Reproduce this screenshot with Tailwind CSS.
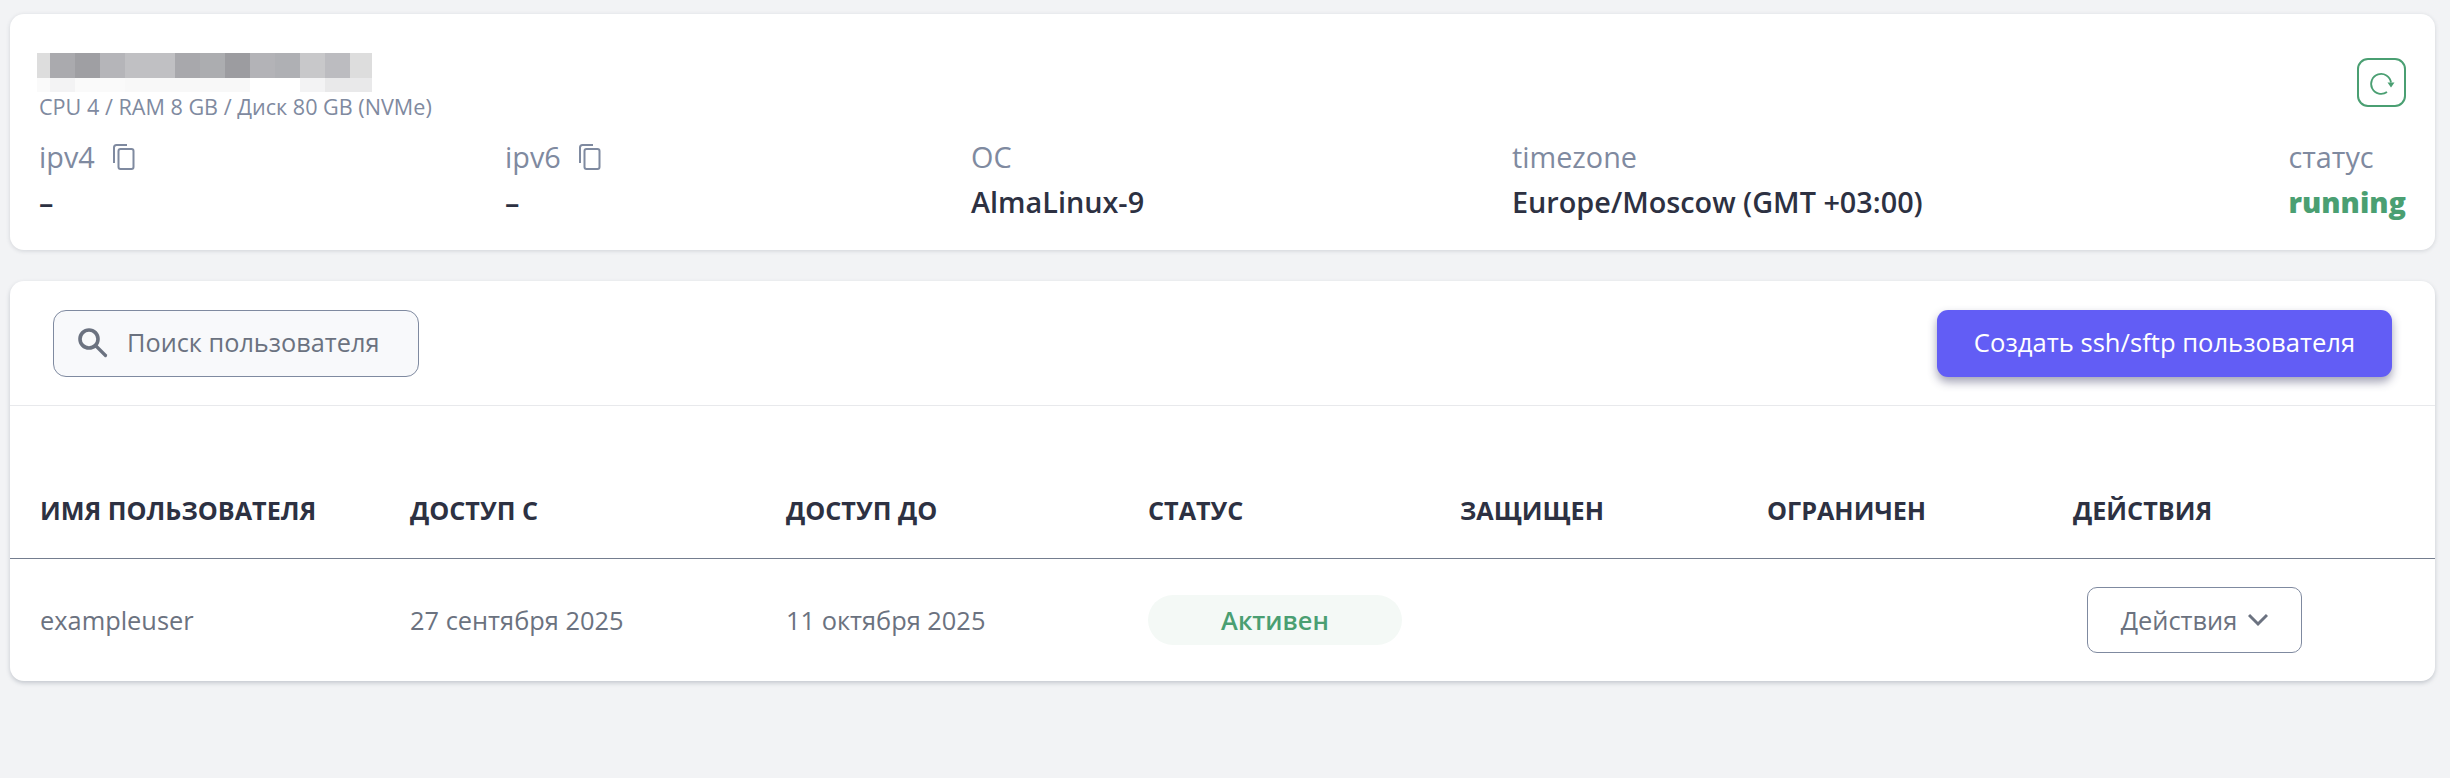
<!DOCTYPE html>
<html lang="ru">
  <head>
    <meta charset="UTF-8" />
    <meta name="viewport" content="width=device-width, initial-scale=1.0" />
    <script src="https://cdn.jsdelivr.net/npm/@tailwindcss/browser@4"></script>
    <title>Сервер</title>
  </head>
  <body class="h-[778px] overflow-hidden bg-[#f2f3f5] font-['Open_Sans',sans-serif] text-[#2d3142]">
    <div class="pt-[14px] pl-[10px] pr-[15px]">
      <!-- server card -->
      <section class="h-[236px] rounded-[14px] bg-white pt-[39px] pl-[27px] pr-[29px] shadow-[0_1px_4px_rgba(60,70,90,0.18)]">
        <div class="flex items-start justify-between">
          <div>
            <div class="flex h-[39px] w-[335px] flex-col">
              <div class="flex h-[25px]">
                <div class="w-[13px] bg-[#dddddd]"></div>
                <div class="w-[25px] bg-[#aaaaae]"></div>
                <div class="w-[25px] bg-[#9f9fa3]"></div>
                <div class="w-[25px] bg-[#b5b5b9]"></div>
                <div class="w-[50px] bg-[#c0c0c3]"></div>
                <div class="w-[25px] bg-[#a8a8ac]"></div>
                <div class="w-[25px] bg-[#acadb0]"></div>
                <div class="w-[25px] bg-[#9c9ca0]"></div>
                <div class="w-[25px] bg-[#b3b3b7]"></div>
                <div class="w-[25px] bg-[#afb0b4]"></div>
                <div class="w-[25px] bg-[#c8c8ca]"></div>
                <div class="w-[25px] bg-[#bcbcc0]"></div>
                <div class="w-[22px] bg-[#dddddd]"></div>
              </div>
              <div class="flex h-[14px]">
                <div class="w-[13px] bg-[#fafafa]"></div>
                <div class="w-[25px] bg-[#f3f3f4]"></div>
                <div class="w-[50px] bg-[#fafafa]"></div>
                <div class="w-[125px] bg-[#f8f8f8]"></div>
                <div class="w-[50px] bg-white"></div>
                <div class="w-[25px] bg-[#f3f3f4]"></div>
                <div class="w-[47px] bg-[#e9e9ea]"></div>
              </div>
            </div>
            <p class="mt-[2px] pl-[2px] text-[21.6px] leading-[26px] text-[#7f8aa0]">CPU 4 / RAM 8 GB / Диск 80 GB (NVMe)</p>
          </div>
          <button class="mt-[5px] flex h-[49px] w-[49px] items-center justify-center rounded-[11px] border-[2.5px] border-[#4a9f72] text-[#4a9f72]">
            <svg class="h-[28px] w-[28px]" viewBox="0 0 28 28" fill="none" stroke="currentColor" stroke-width="1.8">
              <path d="M23 13.500A10 10 0 1 0 19 23" />
              <path d="M19.500 13.500h7l-3.500 5z" fill="currentColor" stroke="none" />
            </svg>
          </button>
        </div>

        <div class="mt-[17px] flex pl-[2px]">
          <div class="w-[466px]">
            <div class="flex items-center text-[28.8px] leading-[40px] text-[#7f8aa0]">
              ipv4
              <svg class="ml-[17px] h-[28px] w-[24px]" viewBox="0 0 24 28" fill="none" stroke="currentColor" stroke-width="2">
                <path d="M15 2H4.500Q2 2 2 4.500V20" />
                <rect x="6.500" y="6" width="15" height="20" rx="2" />
              </svg>
            </div>
            <div class="mt-[5px] text-[28.8px] leading-[40px] font-semibold">–</div>
          </div>
          <div class="w-[466px]">
            <div class="flex items-center text-[28.8px] leading-[40px] text-[#7f8aa0]">
              ipv6
              <svg class="ml-[17px] h-[28px] w-[24px]" viewBox="0 0 24 28" fill="none" stroke="currentColor" stroke-width="2">
                <path d="M15 2H4.500Q2 2 2 4.500V20" />
                <rect x="6.500" y="6" width="15" height="20" rx="2" />
              </svg>
            </div>
            <div class="mt-[5px] text-[28.8px] leading-[40px] font-semibold">–</div>
          </div>
          <div class="w-[541px]">
            <div class="text-[28.8px] leading-[40px] text-[#7f8aa0]">ОС</div>
            <div class="mt-[5px] text-[28.8px] leading-[40px] font-semibold">AlmaLinux-9</div>
          </div>
          <div class="flex-1">
            <div class="text-[28.8px] leading-[40px] text-[#7f8aa0]">timezone</div>
            <div class="mt-[5px] text-[28.8px] leading-[40px] font-semibold">Europe/Moscow (GMT +03:00)</div>
          </div>
          <div>
            <div class="text-[28.8px] leading-[40px] text-[#7f8aa0]">статус</div>
            <div class="mt-[5px] text-[28.8px] leading-[40px] font-extrabold text-[#4a9f72]">running</div>
          </div>
        </div>
      </section>

      <!-- users card -->
      <section class="mt-[31px] h-[400px] rounded-[14px] bg-white shadow-[0_2px_4px_rgba(60,70,90,0.25)]">
        <div class="flex h-[125px] items-center justify-between border-b border-[#e8e9ec] pr-[43px] pl-[43px]">
          <div class="flex h-[67px] w-[366px] items-center rounded-[13px] border border-[#7f8aa0] bg-[#f8f9fb] pl-[24px]">
            <svg class="h-[30px] w-[30px] text-[#6b7280]" viewBox="0 0 30 30" fill="none" stroke="currentColor">
              <circle cx="11" cy="11" r="9" stroke-width="3.600" />
              <path d="M18 18l9.500 9.500" stroke-width="3.200" stroke-linecap="round" />
            </svg>
            <span class="ml-[19px] text-[25.300px] text-[#6b7280]">Поиск пользователя</span>
          </div>
          <button class="h-[67px] w-[455px] rounded-[11px] bg-[#625df5] text-[25.600px] font-medium text-white shadow-[0_5px_10px_rgba(50,50,93,0.45)]">Создать ssh/sftp пользователя</button>
        </div>

        <table class="mt-[58px] w-full table-fixed text-left">
          <thead>
            <tr class="h-[94px] border-b border-[#747d8f] text-[25.200px] uppercase">
              <th class="w-[400px] pl-[30px] font-bold">Имя пользователя</th>
              <th class="w-[376px] font-bold">Доступ с</th>
              <th class="w-[362px] font-bold">Доступ до</th>
              <th class="w-[312px] font-bold">Статус</th>
              <th class="w-[307px] font-bold">Защищен</th>
              <th class="w-[306px] font-bold">Ограничен</th>
              <th class="font-bold">Действия</th>
            </tr>
          </thead>
          <tbody>
            <tr class="h-[123px] text-[25.400px] text-[#6b7280]">
              <td class="pl-[30px]">exampleuser</td>
              <td>27 сентября 2025</td>
              <td>11 октября 2025</td>
              <td>
                <span class="flex h-[50px] w-[254px] items-center justify-center rounded-full bg-[#f4f9f6] font-semibold text-[#4a9f72]">Активен</span>
              </td>
              <td></td>
              <td></td>
              <td>
                <button class="ml-[14px] flex h-[66px] w-[215px] items-center justify-center rounded-[10px] border border-[#7f8aa0] font-medium text-[#6b7280]">
                  Действия
                  <svg class="ml-[11px] h-[14px] w-[20px]" viewBox="0 0 20 14" fill="none" stroke="currentColor" stroke-width="3">
                    <path d="M1 2l9 9 9-9" />
                  </svg>
                </button>
              </td>
            </tr>
          </tbody>
        </table>
      </section>
    </div>
  </body>
</html>
